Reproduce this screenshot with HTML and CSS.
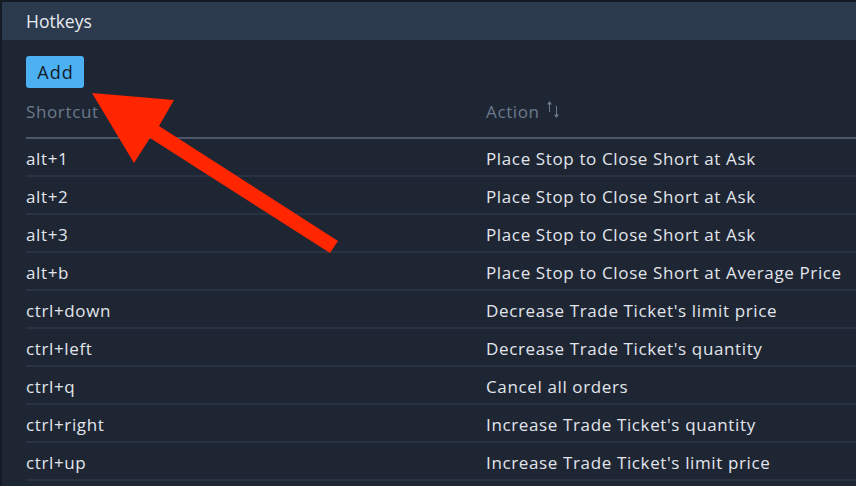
FILE: index.html
```html
<!DOCTYPE html>
<html>
<head>
<meta charset="utf-8">
<link rel="stylesheet" href="styles.css">
</head>
<body>
<div class="panel">
  <div class="panel-header">Hotkeys</div>
  <div class="panel-body">
    <button class="btn-add">Add</button>
    <div class="table">
      <div class="row head">
        <div class="cell c1">Shortcut</div>
        <div class="cell c2">Action
          <svg class="sort" width="14" height="19" viewBox="0 0 14 19"><path d="M3.5 1 L1 4.5 H3 V12 H4 V4.5 H6 Z M10.5 18 L8 14.5 H10 V6 H11 V14.5 H13 Z" fill="#6c7a8c"/></svg>
        </div>
      </div>
      <div class="row"><div class="cell c1">alt+1</div><div class="cell c2">Place Stop to Close Short at Ask</div></div>
      <div class="row"><div class="cell c1">alt+2</div><div class="cell c2">Place Stop to Close Short at Ask</div></div>
      <div class="row"><div class="cell c1">alt+3</div><div class="cell c2">Place Stop to Close Short at Ask</div></div>
      <div class="row"><div class="cell c1">alt+b</div><div class="cell c2">Place Stop to Close Short at Average Price</div></div>
      <div class="row"><div class="cell c1">ctrl+down</div><div class="cell c2">Decrease Trade Ticket's limit price</div></div>
      <div class="row"><div class="cell c1">ctrl+left</div><div class="cell c2">Decrease Trade Ticket's quantity</div></div>
      <div class="row"><div class="cell c1">ctrl+q</div><div class="cell c2">Cancel all orders</div></div>
      <div class="row"><div class="cell c1">ctrl+right</div><div class="cell c2">Increase Trade Ticket's quantity</div></div>
      <div class="row"><div class="cell c1">ctrl+up</div><div class="cell c2">Increase Trade Ticket's limit price</div></div>
    </div>
  </div>
</div>
<svg class="arrow" width="856" height="486" viewBox="0 0 856 486">
  <polygon points="92,93 174,100 159,126 338,241 330,253 150,138 134,163" fill="#ff2600"/>
</svg>
</body>
</html>
```
FILE: styles.css
```css
html, body {
  margin: 0;
  padding: 0;
}
body {
  background: #151b24;
  width: 856px;
  height: 486px;
  overflow: hidden;
  position: relative;
  font-family: "Open Sans", "Noto Sans", sans-serif;
}
.panel {
  margin: 2px 0 0 2px;
  background: #1e2533;
  height: 484px;
}
.panel-header {
  height: 38px;
  background: #2c3a4e;
  color: #e6eaf0;
  font-size: 17.5px;
  line-height: 38px;
  padding-left: 24px;
}
.panel-body {
  padding: 16px 0 0 24px;
}
.btn-add {
  display: block;
  width: 58px;
  height: 32px;
  border: none;
  border-radius: 3px;
  background: #4cb1f3;
  color: #141c28;
  font-family: "Open Sans", "Noto Sans", sans-serif;
  font-size: 18px;
  letter-spacing: 1px;
  padding: 0 0 0 1px;
  margin: 0;
}
.table {
  display: flex;
  flex-direction: column;
}
.row {
  display: flex;
  height: 36px;
  align-items: center;
  border-bottom: 2px solid #283242;
  color: #e2e6ec;
  font-size: 17px;
  letter-spacing: 0.63px;
}
.row .cell {
  position: relative;
  top: 1px;
}
.row.head {
  height: 49px;
  border-bottom: 2px solid #4a586a;
  color: #6c7a8c;
}
.row.head .cell {
  top: -1px;
}
.c1 {
  width: 460px;
  flex: none;
}
.c2 {
  display: flex;
  align-items: center;
}
.sort {
  margin-left: 6px;
  position: relative;
  top: -2px;
}
.arrow {
  position: absolute;
  left: 0;
  top: 0;
}
```
